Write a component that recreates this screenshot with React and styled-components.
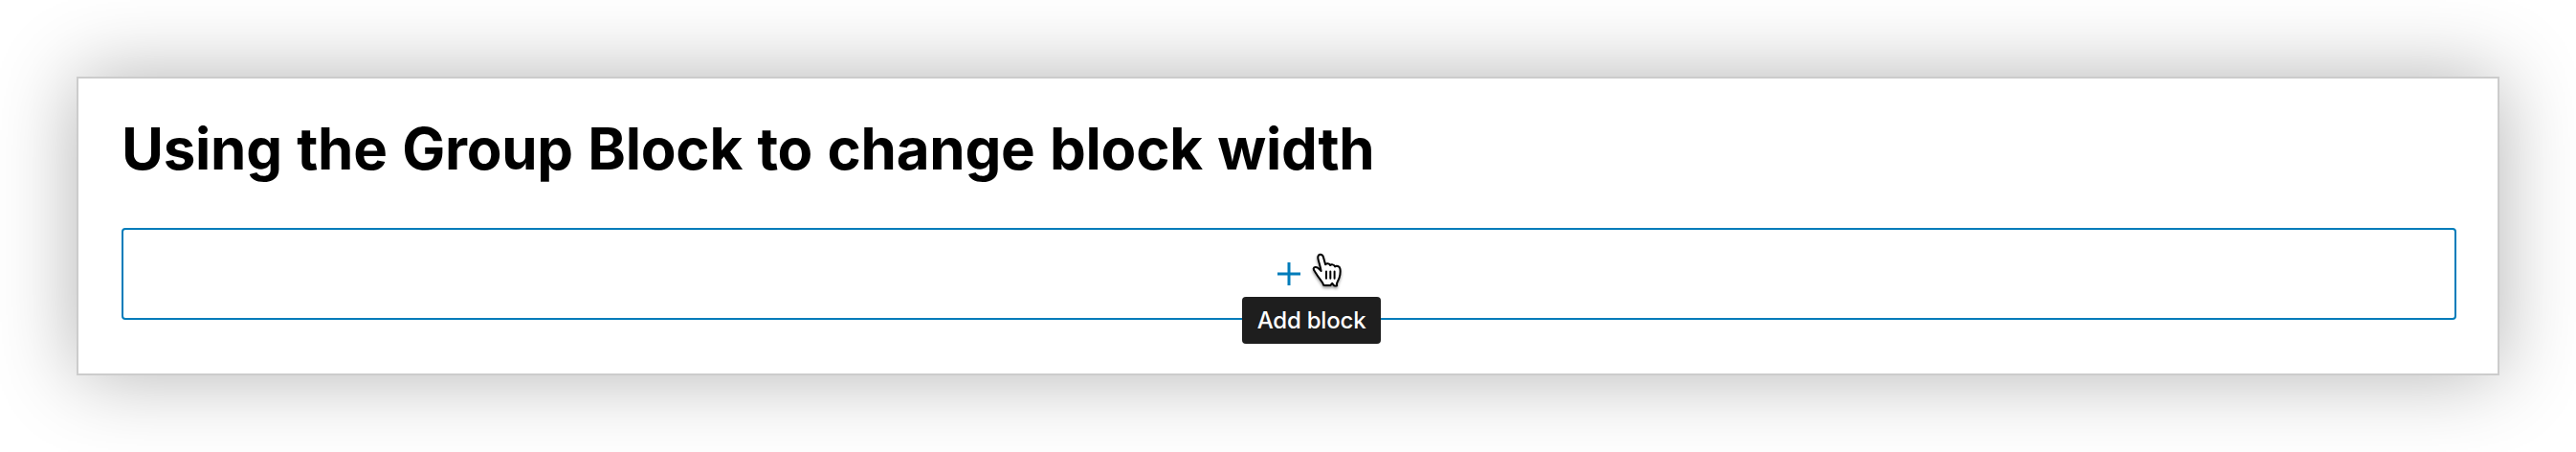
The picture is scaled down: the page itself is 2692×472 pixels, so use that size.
import React from "react";
import styled, { createGlobalStyle } from "styled-components";

const App = () => {
  return (
    <Page>
      <GlobalStyle />
      <Editor>
        <Title>Using the Group Block to change block width</Title>
        <GroupBlock>
          <AddButton aria-label="Add block">
            <PlusIcon viewBox="0 0 24 24">
              <path d="M12 0v24M0 12h24" />
            </PlusIcon>
            <Tooltip>Add block</Tooltip>
          </AddButton>
          <Pointer viewBox="0 0 32 38">
            <path d="M12.2 33.800c-.4-1.700-1.500-3.400-3.100-5.400-1.700-2.200-3.500-4.800-5.300-7.700-.9-1.500-2.300-3-2.100-4.200.3-1.700 2.600-2.200 4.500-.8 1.300 1 2.400 2.300 3.400 3.300-.3-2-.9-4.400-1.600-7-.8-2.800-1.600-4.900-1.700-6.800-.1-2.100 1-3.400 2.500-3.500 1.700-.1 2.700 1.200 3.200 3l2.100 7.600c.7-1.500 4.300-1.500 4.900.8 1.100-1.400 4.500-1 5 1.300 1.700-1.300 5-.4 5.400 2.200.6 3.400.1 6.700-.9 9.700-.8 2.400-2.400 4-2.500 6.200l.1 1.900c-1.700.4-2.900.3-3.600-.9l-1.300-1.600-1.900 2.100c-1.800.2-4.500.1-7.100-.2Z" />
            <path d="M15 19.500v7.300M19.300 19.500v7.300M23.600 19.500v7.300" />
          </Pointer>
        </GroupBlock>
      </Editor>
    </Page>
  );
};

const GlobalStyle = createGlobalStyle`
  * {
    box-sizing: border-box;
  }

  body {
    margin: 0;
    background: #fff;
  }
`;

const Page = styled.div`
  height: 472px;
  padding: 80px;
  overflow: hidden;
`;

const Editor = styled.main`
  height: 312px;
  padding: 37px 43px 0 45px;
  border: 2px solid #ccc;
  background: #fff;
  box-shadow: 0 0 80px rgba(0, 0, 0, 0.3);
`;

const Title = styled.h1`
  margin: 0 0 47px;
  color: #000;
  font-family: Inter, "Liberation Sans", sans-serif;
  font-size: 60px;
  font-weight: 700;
  line-height: 72px;
  letter-spacing: -0.25px;
  word-spacing: 1.5px;
  white-space: nowrap;
`;

const GroupBlock = styled.section`
  position: relative;
  display: flex;
  align-items: center;
  justify-content: center;
  height: 96px;
  border: 2px solid #007cba;
  border-radius: 4px;
`;

const AddButton = styled.button`
  position: relative;
  display: flex;
  padding: 0;
  border: 0;
  background: none;
  cursor: pointer;
`;

const PlusIcon = styled.svg`
  width: 24px;
  height: 24px;
  stroke: #007cba;
  stroke-width: 3;
`;

const Tooltip = styled.span`
  position: absolute;
  top: 36px;
  left: -37px;
  width: 145px;
  height: 49px;
  border-radius: 4px;
  background: #1e1e1e;
  color: #fff;
  font-family: Inter, "Liberation Sans", sans-serif;
  font-size: 24px;
  font-weight: 500;
  letter-spacing: -0.2px;
  line-height: 49px;
  text-align: center;
  white-space: nowrap;
`;

const Pointer = styled.svg`
  position: absolute;
  top: 24px;
  left: 1242px;
  width: 32px;
  height: 38px;
  overflow: visible;
  fill: #fff;
  stroke: #000;
  stroke-width: 2;
  stroke-linejoin: round;
  stroke-linecap: round;
  filter: drop-shadow(0 2px 1.5px rgba(0, 0, 0, 0.4));
`;

export default App;
